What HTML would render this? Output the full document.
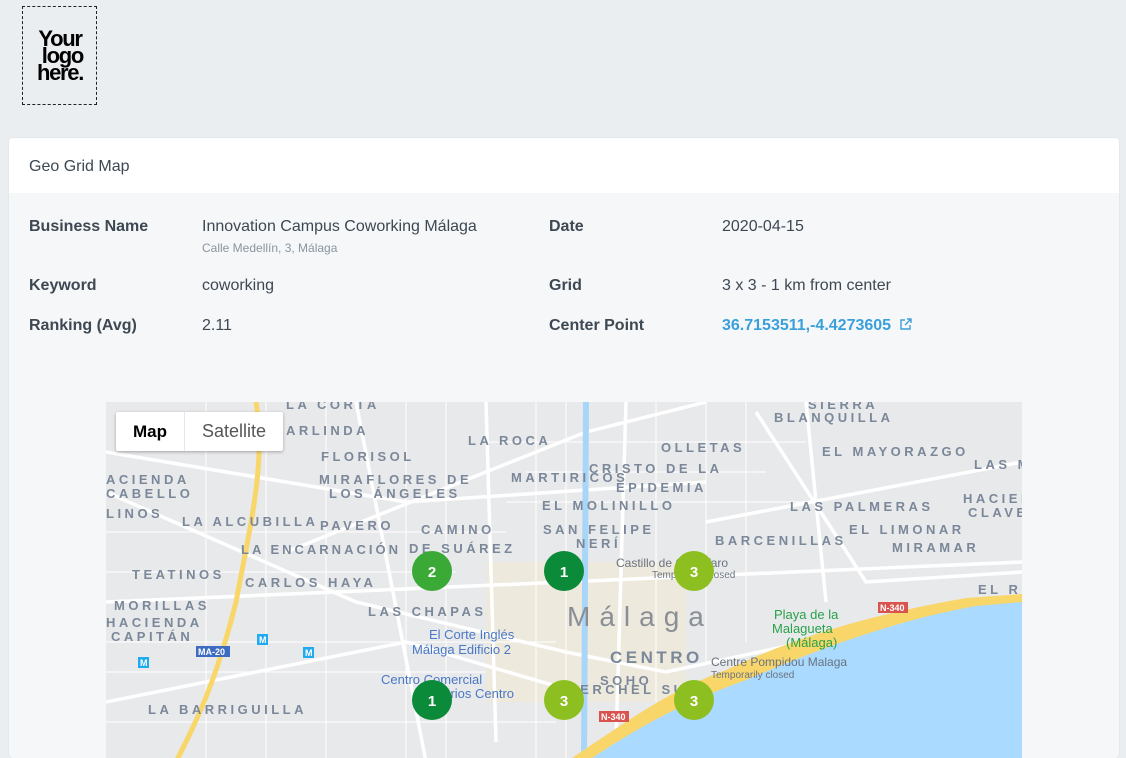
<!DOCTYPE html>
<html><head><meta charset="utf-8"><style>
*{margin:0;padding:0;box-sizing:border-box}
body{width:1126px;height:744px;overflow:hidden;background:#ebeef1;font-family:"Liberation Sans",sans-serif;color:#3d4852;position:relative}
.logo{position:absolute;left:22px;top:6px;width:75px;height:99px;border:1.5px dashed #222;}
.logo div{position:absolute;left:8px;top:23px;font-weight:bold;font-size:22px;line-height:17px;letter-spacing:-1.3px;color:#000;text-align:center;width:58px}
.card{position:absolute;left:9px;top:138px;width:1110px;height:620px;background:#f6f7f9;border-radius:4px;overflow:hidden;box-shadow:0 0 1px rgba(0,0,0,.15)}
.hdr{height:55px;background:#fff;padding:20px 20px;font-size:16px;color:#3d4852}
.t{position:absolute;font-size:16px;white-space:nowrap}
.b{font-weight:bold}
.map{position:absolute;left:97px;top:264px;width:916px;height:360px;overflow:hidden;background:#e8e9eb}
.mt{position:absolute;left:10px;top:10px;height:39px;background:#fff;box-shadow:0 1px 3px rgba(0,0,0,.3);border-radius:2px;display:flex;font-size:18px}
.mt div{padding:0 17px;line-height:39px}
</style></head><body>
<div class="logo"><div>Your<br>&nbsp;logo<br>here.</div></div>
<div class="card">
<div class="hdr">Geo Grid Map</div>
<div class="t b" style="left:20px;top:80px">Business Name</div>
<div class="t" style="left:193px;top:80px">Innovation Campus Coworking Málaga</div>
<div class="t" style="left:193px;top:103px;font-size:12px;color:#8795a1">Calle Medellín, 3, Málaga</div>
<div class="t b" style="left:20px;top:139px">Keyword</div>
<div class="t" style="left:193px;top:139px">coworking</div>
<div class="t b" style="left:20px;top:179px">Ranking (Avg)</div>
<div class="t" style="left:193px;top:179px">2.11</div>
<div class="t b" style="left:540px;top:80px">Date</div>
<div class="t" style="left:713px;top:80px">2020-04-15</div>
<div class="t b" style="left:540px;top:139px">Grid</div>
<div class="t" style="left:713px;top:139px">3 x 3 - 1 km from center</div>
<div class="t b" style="left:540px;top:179px">Center Point</div>
<div class="t b" style="left:713px;top:179px;color:#3aa0dc">36.7153511,-4.4273605 <svg width="14" height="14" viewBox="0 0 14 14" style="vertical-align:-1px;margin-left:3px"><path d="M6 3H2v9h9V8M8 2h4v4M12 2L6 8" fill="none" stroke="#3aa0dc" stroke-width="1.4"/></svg></div>
<div class="map">
<svg width="916" height="360" viewBox="0 0 916 360" style="position:absolute;left:0;top:0" font-family="Liberation Sans,sans-serif">
<rect width="916" height="360" fill="#e8e9eb"/>
<rect x="380" y="160" width="200" height="140" fill="#f1ead4" opacity=".6"/>
<g stroke="#fff" fill="none" stroke-width="3.5">
<path d="M0 90 L250 200 L460 250 L560 270 L700 240"/>
<path d="M0 300 L300 240 L470 290"/>
<path d="M180 150 L480 30 L600 0"/>
<path d="M380 0 L390 340"/><path d="M520 0 L510 340"/>
<path d="M0 200 L916 160"/><path d="M600 120 L916 60"/>
<path d="M250 0 L320 360"/><path d="M700 0 L720 200"/>
<path d="M0 50 L300 100 L600 80"/><path d="M650 10 L760 180 L916 170"/>
</g>
<g stroke="#fff" fill="none" stroke-width="1.2" opacity=".85">
<path d="M0 130 H400 M0 170 H350 M0 240 H450 M0 270 H380 M100 0 V360 M160 0 V360 M220 0 V360 M300 0 V360 M340 0 V360 M430 0 V360 M460 0 V360 M550 0 V300 M600 0 V260 M640 0 V240 M0 320 H450 M380 40 H700 M400 100 H700 M420 70 H660"/>
</g>
<path d="M150 0 C160 60 145 120 130 200 C110 280 90 320 70 360" stroke="#f8d66a" stroke-width="5" fill="none"/>
<path d="M480 0 L478 360" stroke="#a8d6f8" stroke-width="6"/>
<path d="M460 360 C520 320 560 290 620 268 C700 230 780 210 860 196 L916 192 L916 360 Z" fill="#f8d66a"/>
<path d="M480 360 C540 320 580 300 640 278 C710 248 790 218 870 204 L916 200 L916 360 Z" fill="#aadaff"/>
<g fill="#7b8899" font-size="13" font-weight="bold" letter-spacing="3.5">
<text x="180" y="7">LA CORTA</text><text x="180" y="33">ARLINDA</text>
<text x="362" y="43">LA ROCA</text><text x="215" y="59">FLORISOL</text>
<text x="213" y="82">MIRAFLORES DE</text><text x="223" y="96">LOS ÁNGELES</text>
<text x="405" y="80">MARTIRICOS</text><text x="436" y="108">EL MOLINILLO</text>
<text x="437" y="132">SAN FELIPE</text><text x="470" y="146">NERÍ</text>
<text x="315" y="132">CAMINO</text><text x="303" y="151">DE SUÁREZ</text>
<text x="214" y="128">PAVERO</text><text x="76" y="124">LA ALCUBILLA</text>
<text x="135" y="152" letter-spacing="3">LA ENCARNACIÓN</text><text x="26" y="177">TEATINOS</text>
<text x="139" y="185">CARLOS HAYA</text><text x="262" y="214">LAS CHAPAS</text>
<text x="8" y="208">MORILLAS</text><text x="0" y="225">HACIENDA</text><text x="5" y="239">CAPITÁN</text>
<text x="0" y="82">ACIENDA</text><text x="0" y="96">CABELLO</text><text x="0" y="116">LINOS</text>
<text x="42" y="312">LA BARRIGUILLA</text><text x="462" y="292">PERCHEL SUR</text>
<text x="483" y="71">CRISTO DE LA</text><text x="510" y="90">EPIDEMIA</text>
<text x="555" y="50">OLLETAS</text><text x="702" y="7">SIERRA</text><text x="668" y="20">BLANQUILLA</text>
<text x="716" y="54">EL MAYORAZGO</text><text x="868" y="67">LAS M</text>
<text x="684" y="109">LAS PALMERAS</text><text x="857" y="101">HACIEN</text><text x="862" y="115">CLAVE</text>
<text x="609" y="143">BARCENILLAS</text><text x="743" y="132">EL LIMONAR</text><text x="786" y="150">MIRAMAR</text>
<text x="872" y="192">EL R</text>
<text x="504" y="261" font-size="17">CENTRO</text><text x="494" y="283">SOHO</text>
</g>
<text x="461" y="224" font-size="28" fill="#8a8f96" letter-spacing="9">Málaga</text>
<g font-size="13" fill="#4a78c6"><text x="323" y="237">El Corte Inglés</text><text x="306" y="252">Málaga Edificio 2</text>
<text x="275" y="282">Centro Comercial</text><text x="330" y="296">Larios Centro</text></g>
<g font-size="12" fill="#6a7380"><text x="510" y="165">Castillo de Gibralfaro</text><text x="546" y="176" font-size="10">Temporarily closed</text>
<text x="605" y="264">Centre Pompidou Malaga</text><text x="605" y="276" font-size="10">Temporarily closed</text></g>
<g font-size="13" fill="#27a24a"><text x="668" y="217">Playa de la</text><text x="666" y="231">Malagueta</text><text x="680" y="245">(Málaga)</text></g>
<rect x="90" y="244" width="34" height="11" fill="#3c6cc2"/><text x="92" y="253" font-size="9" fill="#fff" font-weight="bold">MA-20</text>
<rect x="772" y="200" width="30" height="11" fill="#d9534f"/><text x="774" y="209" font-size="9" fill="#fff" font-weight="bold">N-340</text>
<rect x="493" y="309" width="30" height="11" fill="#d9534f"/><text x="495" y="318" font-size="9" fill="#fff" font-weight="bold">N-340</text>
<g font-size="9" fill="#fff" font-weight="bold"><rect x="32" y="255" width="11" height="11" fill="#22aaf0"/><text x="34" y="264">M</text>
<rect x="151" y="232" width="11" height="11" fill="#22aaf0"/><text x="153" y="241">M</text>
<rect x="197" y="245" width="11" height="11" fill="#22aaf0"/><text x="199" y="254">M</text></g>
<g font-size="15" fill="#fff" text-anchor="middle" font-weight="bold">
<circle cx="326" cy="169" r="20" fill="#3aa935"/><text x="326" y="175">2</text>
<circle cx="458" cy="169" r="20" fill="#0b8a3a"/><text x="458" y="175">1</text>
<circle cx="588" cy="169" r="20" fill="#8dbf20"/><text x="588" y="175">3</text>
<circle cx="326" cy="298" r="20" fill="#0b8a3a"/><text x="326" y="304">1</text>
<circle cx="458" cy="298" r="20" fill="#8dbf20"/><text x="458" y="304">3</text>
<circle cx="588" cy="298" r="20" fill="#8dbf20"/><text x="588" y="304">3</text>
</g>
</svg>
<div class="mt"><div style="color:#000;font-weight:bold;font-size:17px">Map</div><div style="border-left:1px solid #e6e6e6;color:#565656">Satellite</div></div>
</div>
</div>
</body></html>
